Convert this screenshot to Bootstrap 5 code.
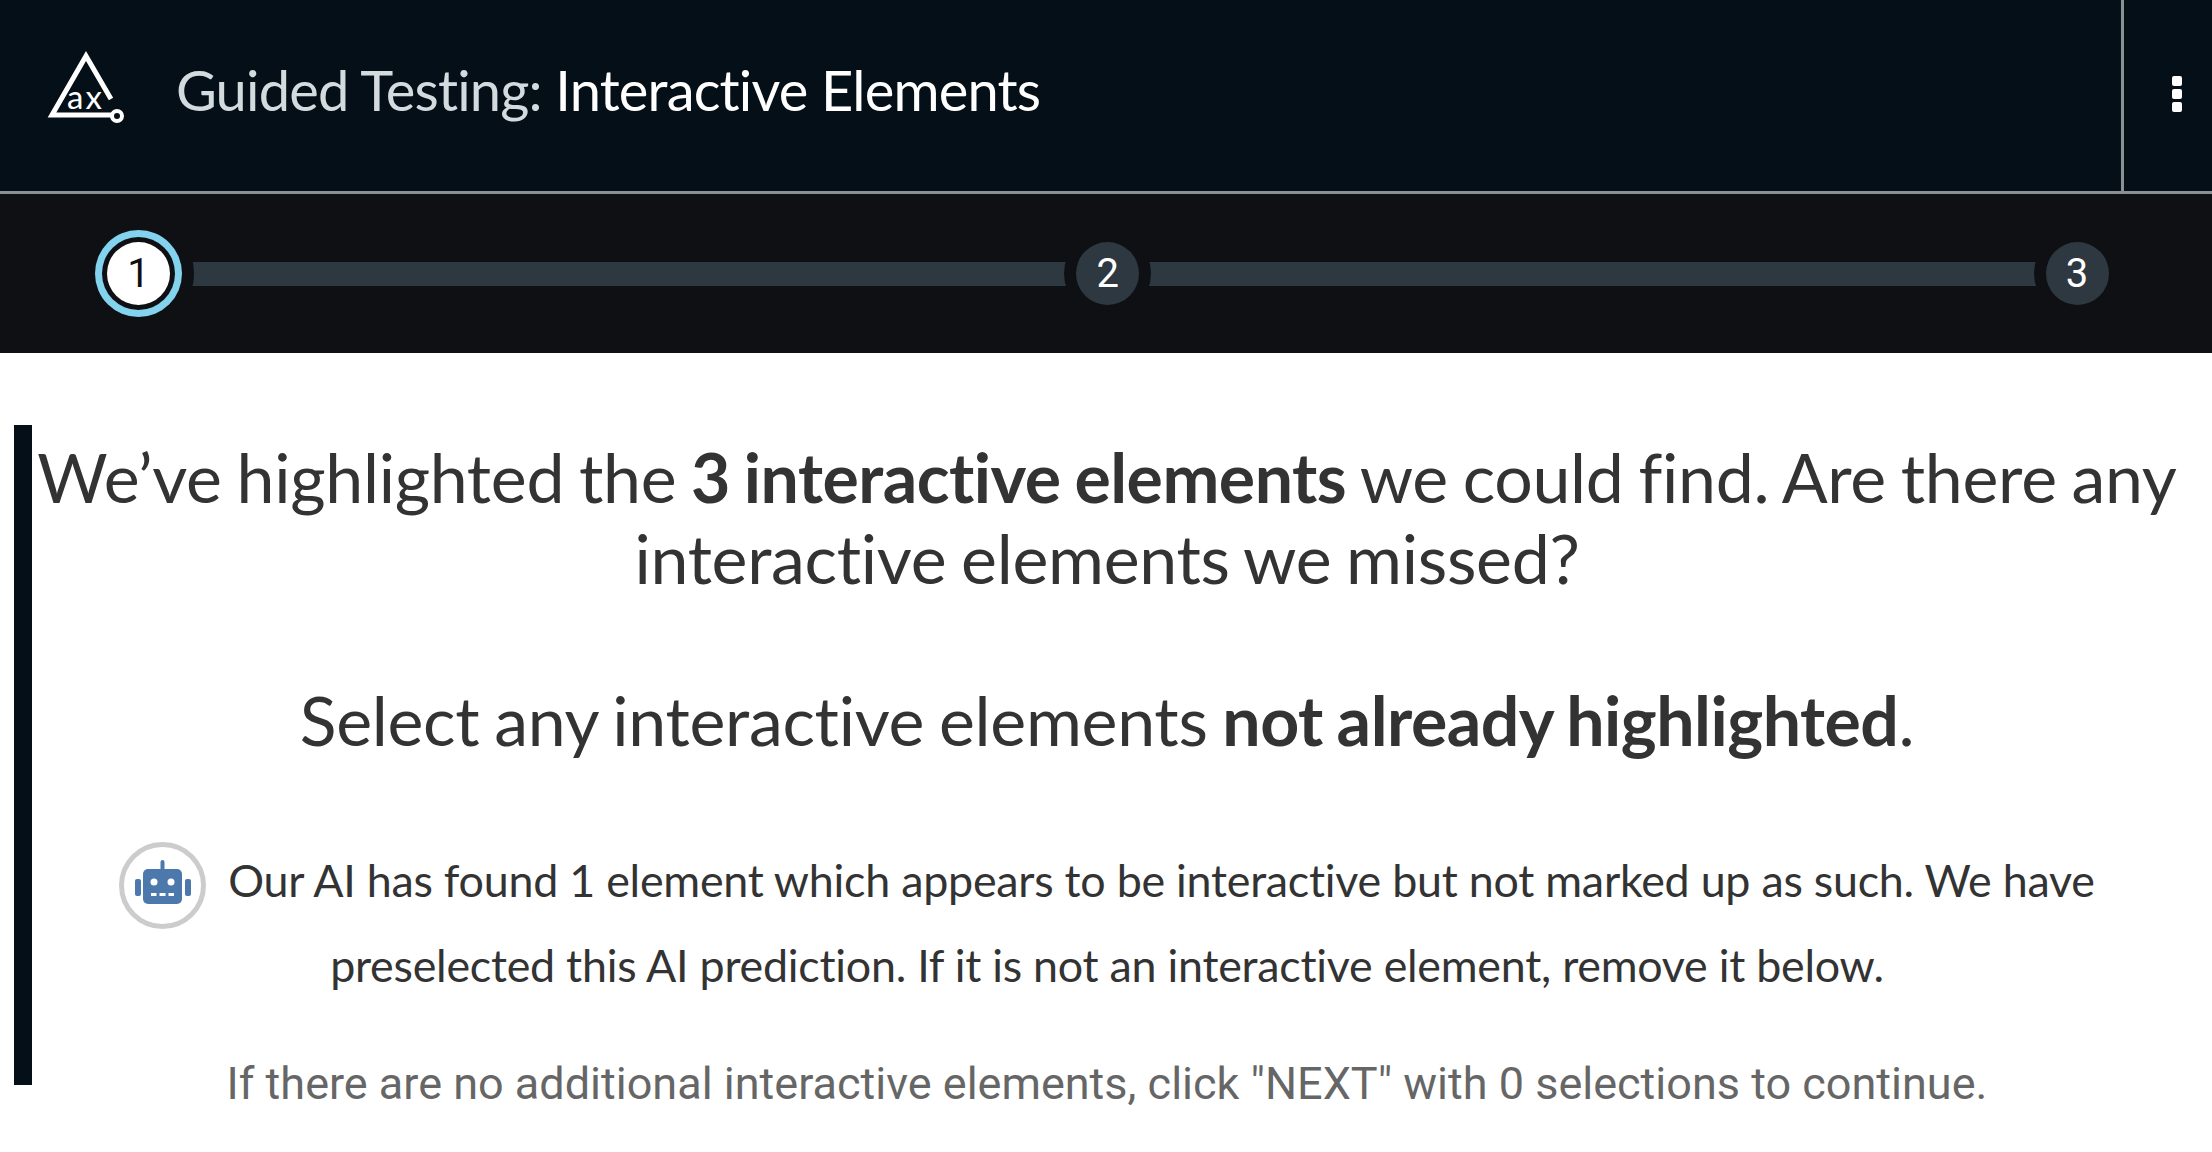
<!DOCTYPE html>
<html lang="en">

<head>
    <meta charset="UTF-8">
    <meta name="viewport" content="width=device-width, initial-scale=1.0">
    <title>Guided Testing: Interactive Elements</title>
    <link rel="stylesheet" href="https://cdn.jsdelivr.net/npm/bootstrap@5.3.0/dist/css/bootstrap.min.css">
    <script src="https://cdn.jsdelivr.net/npm/bootstrap@5.3.0/dist/js/bootstrap.bundle.min.js"></script>
    <style>
        body { font-family: "Lato", sans-serif; color: #333; background: #fff; min-height: 1152px; }

        /* top bar */
        .top-bar { height: 194px; background: #050f18; border-bottom: 3px solid #8a9194; }
        .top-logo { width: 176px; }
        .top-title { font-size: 56px; letter-spacing: -0.82px; color: #d4dbdf; line-height: 1; margin: 0; font-weight: 400; }
        .top-title span { color: #fff; }
        .top-title-wrap { padding-bottom: 11px; }
        .top-menu { width: 91px; border-left: 3px solid #8a9194; padding-left: 48px; padding-bottom: 3px; gap: 3px; }
        .top-menu i { display: block; width: 10px; height: 10px; border-radius: 2px; background: #fff; }

        /* stepper */
        .step-strip { height: 159px; background: #0e1014; padding: 0 103.5px 0 107px; }
        .step-dot { width: 63px; height: 63px; border-radius: 50%; background: #2e3840; color: #fff; font-family: "Roboto", sans-serif; font-size: 40px; position: relative; z-index: 1; box-shadow: 0 0 0 12px #0e1014; flex: none; }
        .step-dot.is-current { background: #fff; color: #0e1014; box-shadow: 0 0 0 5px #0e1014, 0 0 0 12px #84d3ee, 0 0 0 24px #0e1014; }
        .step-line { height: 24px; background: #2e3840; }

        /* copy */
        .guide-block { margin: 72px 30px 0 14px; padding-top: 11px; height: 660px; border-left: 18px solid #050f18; }
        .guide-heading { font-size: 68px; letter-spacing: -0.3px; word-spacing: -2.3px; line-height: 81px; font-weight: 400; margin: 0; }
        .guide-heading strong { letter-spacing: -0.5px; }
        .guide-heading + .guide-heading { margin-top: 81px; }
        .guide-note { font-size: 44.8px; letter-spacing: -0.25px; line-height: 85px; margin: 78px 0 0; }
        .guide-note svg { width: 87px; height: 87px; vertical-align: middle; margin: -12px 22px -12px 0; }
        .guide-hint { font-family: "Roboto", sans-serif; font-size: 45px; line-height: 60px; color: #666; margin: 46px 0 0; }
        strong { font-weight: 700; }
    </style>
</head>

<body>

    <!-- Header -->
    <div class="top-bar d-flex align-items-stretch">
        <div class="top-logo d-flex align-items-center justify-content-center">
            <svg width="176" height="191" viewBox="0 0 176 191" fill="none">
                <path d="M111 99 86 56 52 115H111" stroke="#fff" stroke-width="5"/>
                <circle cx="117" cy="116" r="5" stroke="#fff" stroke-width="4"/>
                <text x="67" y="109" fill="#fff" font-family="Lato, sans-serif" font-size="33" letter-spacing="2">ax</text>
            </svg>
        </div>
        <div class="top-title-wrap flex-grow-1 d-flex align-items-center">
            <h1 class="top-title">Guided Testing: <span>Interactive Elements</span></h1>
        </div>
        <div class="top-menu d-flex flex-column justify-content-center">
            <i></i><i></i><i></i>
        </div>
    </div>

    <!-- Steps -->
    <div class="step-strip d-flex align-items-center">
        <div class="step-dot is-current d-flex align-items-center justify-content-center">1</div>
        <div class="step-line flex-grow-1"></div>
        <div class="step-dot d-flex align-items-center justify-content-center">2</div>
        <div class="step-line flex-grow-1"></div>
        <div class="step-dot d-flex align-items-center justify-content-center">3</div>
    </div>

    <!-- Instructions -->
    <div class="guide-block text-center">
        <h2 class="guide-heading">We’ve highlighted the <strong>3 interactive elements</strong> we could find. Are there any interactive elements we missed?</h2>
        <h2 class="guide-heading">Select any interactive elements <strong>not already highlighted</strong>.</h2>
        <p class="guide-note">
            <svg viewBox="0 0 87 87" fill="none">
                <circle cx="43.5" cy="43.5" r="41" fill="#fff" stroke="#ccc" stroke-width="5"/>
                <rect x="24" y="27" width="39" height="35" rx="5" fill="#4d78ab"/>
                <rect x="41.5" y="18" width="4" height="12" rx="2" fill="#4d78ab"/>
                <rect x="16" y="37" width="6" height="17" rx="2" fill="#4d78ab"/>
                <rect x="66" y="37" width="6" height="17" rx="2" fill="#4d78ab"/>
                <circle cx="35" cy="40" r="3.5" fill="#fff"/>
                <circle cx="52" cy="40" r="3.5" fill="#fff"/>
                <path d="M32 52.5h5.5M40.5 52.5h6M49.5 52.5h5.5" stroke="#fff" stroke-width="3"/>
            </svg>Our AI has found 1 element which appears to be interactive but not marked up as such. We have preselected this AI prediction. If it is not an interactive element, remove it below.
        </p>
        <p class="guide-hint">If there are no additional interactive elements, click "NEXT" with 0 selections to continue.</p>
    </div>

</body>

</html>
